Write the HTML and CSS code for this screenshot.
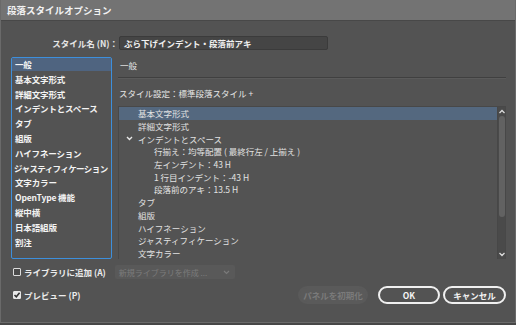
FILE: index.html
```html
<!DOCTYPE html>
<html lang="ja">
<head>
    <meta charset="UTF-8">
    <title>段落スタイルオプション</title>
    <link rel="stylesheet" href="styles.css">
</head>
<body>
<div class="dialog">
    <div class="titlebar">段落スタイルオプション</div>
    <div class="dialog-body">
        <div class="name-row">
            <div class="name-label">スタイル名 (N)：</div>
            <div class="name-input">ぶら下げインデント・段落前アキ</div>
        </div>
        <div class="main">
            <ul class="category-list">
                <li class="selected">一般</li>
                <li>基本文字形式</li>
                <li>詳細文字形式</li>
                <li>インデントとスペース</li>
                <li>タブ</li>
                <li>組版</li>
                <li>ハイフネーション</li>
                <li class="tight">ジャスティフィケーション</li>
                <li>文字カラー</li>
                <li>OpenType 機能</li>
                <li>縦中横</li>
                <li>日本語組版</li>
                <li>割注</li>
            </ul>
            <div class="panel">
                <div class="panel-title">一般</div>
                <div class="panel-sep"></div>
                <div class="style-settings">スタイル設定：標準段落スタイル +</div>
                <div class="tree">
                    <ul class="tree-rows">
                        <li class="lv1 selected">基本文字形式</li>
                        <li class="lv1">詳細文字形式</li>
                        <li class="lv1 open">
                            <svg class="chevron" width="7" height="5" viewBox="0 0 7 5"><path d="M1 1 L3.5 3.5 L6 1" fill="none" stroke="#e8e8e8" stroke-width="1.4"/></svg>
                            インデントとスペース
                        </li>
                        <li class="lv2">行揃え：均等配置 ( 最終行左 / 上揃え )</li>
                        <li class="lv2">左インデント：43 H</li>
                        <li class="lv2">1 行目インデント：-43 H</li>
                        <li class="lv2">段落前のアキ：13.5 H</li>
                        <li class="lv1">タブ</li>
                        <li class="lv1">組版</li>
                        <li class="lv1">ハイフネーション</li>
                        <li class="lv1">ジャスティフィケーション</li>
                        <li class="lv1">文字カラー</li>
                    </ul>
                    <div class="scrollbar">
                        <svg class="arrow" width="8" height="7" viewBox="0 0 8 7"><path d="M1.5 5 L4 2.5 L6.5 5" fill="none" stroke="#dcdcdc" stroke-width="1.3"/></svg>
                        <div class="thumb"></div>
                        <div class="track"></div>
                        <svg class="arrow" width="8" height="7" viewBox="0 0 8 7"><path d="M1.5 2 L4 4.5 L6.5 2" fill="none" stroke="#dcdcdc" stroke-width="1.3"/></svg>
                    </div>
                </div>
            </div>
        </div>
        <div class="footer">
            <div class="footer-row">
                <span class="checkbox"></span>
                <span class="check-label">ライブラリに追加 (A)</span>
                <div class="select">
                    <span>新規ライブラリを作成 ...</span>
                    <svg width="7" height="5" viewBox="0 0 7 5"><path d="M1 1 L3.5 3.5 L6 1" fill="none" stroke="#7a7a7a" stroke-width="1.2"/></svg>
                </div>
            </div>
            <div class="footer-row">
                <span class="checkbox checked">
                    <svg width="8" height="8" viewBox="0 0 8 8"><path d="M1.5 4 L3.3 5.8 L6.6 1.8" fill="none" stroke="#333" stroke-width="1.6"/></svg>
                </span>
                <span class="check-label">プレビュー (P)</span>
                <div class="buttons">
                    <button class="btn disabled">パネルを初期化</button>
                    <button class="btn ok">OK</button>
                    <button class="btn cancel">キャンセル</button>
                </div>
            </div>
        </div>
    </div>
</div>
</body>
</html>
```

FILE: styles.css
```css
* {
    margin: 0;
    padding: 0;
    box-sizing: border-box;
}

body {
    width: 516px;
    height: 325px;
    background: #474747;
    font-family: "Noto Sans CJK JP", "Noto Sans", sans-serif;
    color: #e6e6e6;
    overflow: hidden;
}

ul {
    list-style: none;
}

.dialog {
    width: 516px;
    height: 323px;
    background: #535353;
    border: 1px solid #6a6a6a;
    border-top: 0;
}

.titlebar {
    height: 21px;
    line-height: 20px;
    padding-left: 6px;
    background: #737373;
    border-bottom: 1px solid #484848;
    color: #f2f2f2;
    font-size: 9.5px;
    font-weight: bold;
}

.dialog-body {
    padding: 15px 9px 0 10px;
}

/* name row */
.name-row {
    display: flex;
    align-items: center;
    height: 14px;
}

.name-label {
    width: 107px;
    text-align: right;
    font-size: 8.5px;
    font-weight: bold;
    color: #e6e6e6;
}

.name-input {
    width: 209px;
    height: 14px;
    margin-left: 1px;
    padding-left: 4px;
    line-height: 12px;
    background: #454545;
    border: 1px solid #3b3b3b;
    border-radius: 2px;
    font-size: 8.5px;
    font-weight: bold;
    color: #f0f0f0;
}

/* main area */
.main {
    display: flex;
    margin-top: 7px;
}

.category-list {
    width: 101px;
    height: 202px;
    border: 1px solid #3d8fdc;
    border-radius: 2px;
    overflow: hidden;
}

.category-list li {
    height: 14.8px;
    line-height: 13.5px;
    padding-left: 3px;
    font-size: 8.5px;
    font-weight: bold;
    color: #f4f4f4;
    white-space: nowrap;
    letter-spacing: -0.15px;
}

.category-list li.tight {
    padding-left: 2px;
    letter-spacing: -0.6px;
}

.category-list li.selected {
    background: #4f6480;
    height: 13px;
    margin-bottom: 1.8px;
}

.panel {
    flex: 1;
    margin-left: 6px;
}

.panel-title {
    height: 14px;
    line-height: 14px;
    margin-top: 1px;
    padding-left: 2px;
    font-size: 8.5px;
    color: #e6e6e6;
}

.panel-sep {
    margin-top: 5px;
    height: 2px;
    border-top: 1px solid #404040;
    border-bottom: 1px solid #5b5b5b;
}

.style-settings {
    margin-top: 7px;
    height: 14px;
    line-height: 14px;
    padding-left: 1px;
    font-size: 8.5px;
    color: #e6e6e6;
}

.tree {
    display: flex;
    margin-top: 6px;
    height: 153px;
    border: 1px solid #484848;
    border-bottom: 0;
    overflow: hidden;
}

.tree-rows {
    flex: 1;
}

.tree-rows li {
    display: flex;
    align-items: center;
    height: 12.7px;
    font-size: 8.5px;
    color: #e2e2e2;
    white-space: nowrap;
}

.tree-rows li.lv1 {
    padding-left: 19px;
}

.tree-rows li.lv2 {
    padding-left: 35px;
}

.tree-rows li.open {
    padding-left: 7px;
}

.tree-rows li.selected {
    background: #54687f;
}

.chevron {
    margin-right: 5px;
}

.scrollbar {
    display: flex;
    flex-direction: column;
    align-items: center;
    width: 8px;
    background: #4a4a4a;
    border-left: 1px solid #474747;
}

.scrollbar .arrow {
    flex: none;
    margin: 1px 0;
}

.scrollbar .thumb {
    width: 6px;
    height: 101px;
    background: #626262;
    border-radius: 3px;
}

.scrollbar .track {
    flex: 1;
}

/* footer */
.footer-row {
    display: flex;
    align-items: center;
}

.footer-row:first-child {
    margin-top: 5px;
    height: 16px;
}

.footer-row:last-child {
    margin-top: 6px;
    height: 18px;
}

.checkbox {
    display: inline-flex;
    align-items: center;
    justify-content: center;
    width: 8px;
    height: 8px;
    margin-left: 2px;
    border: 1px solid #dcdcdc;
    border-radius: 1px;
    background: #4a4a4a;
}

.checkbox.checked {
    background: #e8e8e8;
    border-color: #e8e8e8;
}

.checkbox.checked svg {
    flex: none;
}

.check-label {
    margin-left: 3px;
    font-size: 8.5px;
    font-weight: bold;
    color: #ececec;
}

.select {
    display: flex;
    align-items: center;
    justify-content: space-between;
    width: 120px;
    height: 14px;
    margin-left: 9px;
    padding: 0 5px 0 4px;
    background: #595959;
    border-radius: 2px;
    font-size: 8px;
    color: #7c7c7c;
}

.buttons {
    display: flex;
    margin-left: auto;
}

.btn {
    height: 18px;
    border-radius: 9px;
    font-family: "Noto Sans CJK JP", "Noto Sans", sans-serif;
    font-size: 8.5px;
    font-weight: bold;
    background: #535353;
    color: #f4f4f4;
    border: 2px solid #f0f0f0;
}

.btn.disabled {
    width: 70px;
    background: #5a5a5a;
    border-color: #5a5a5a;
    color: #7a7a7a;
}

.btn.ok {
    width: 62px;
    margin-left: 10px;
}

.btn.cancel {
    width: 63px;
    margin-left: 3px;
}
```
